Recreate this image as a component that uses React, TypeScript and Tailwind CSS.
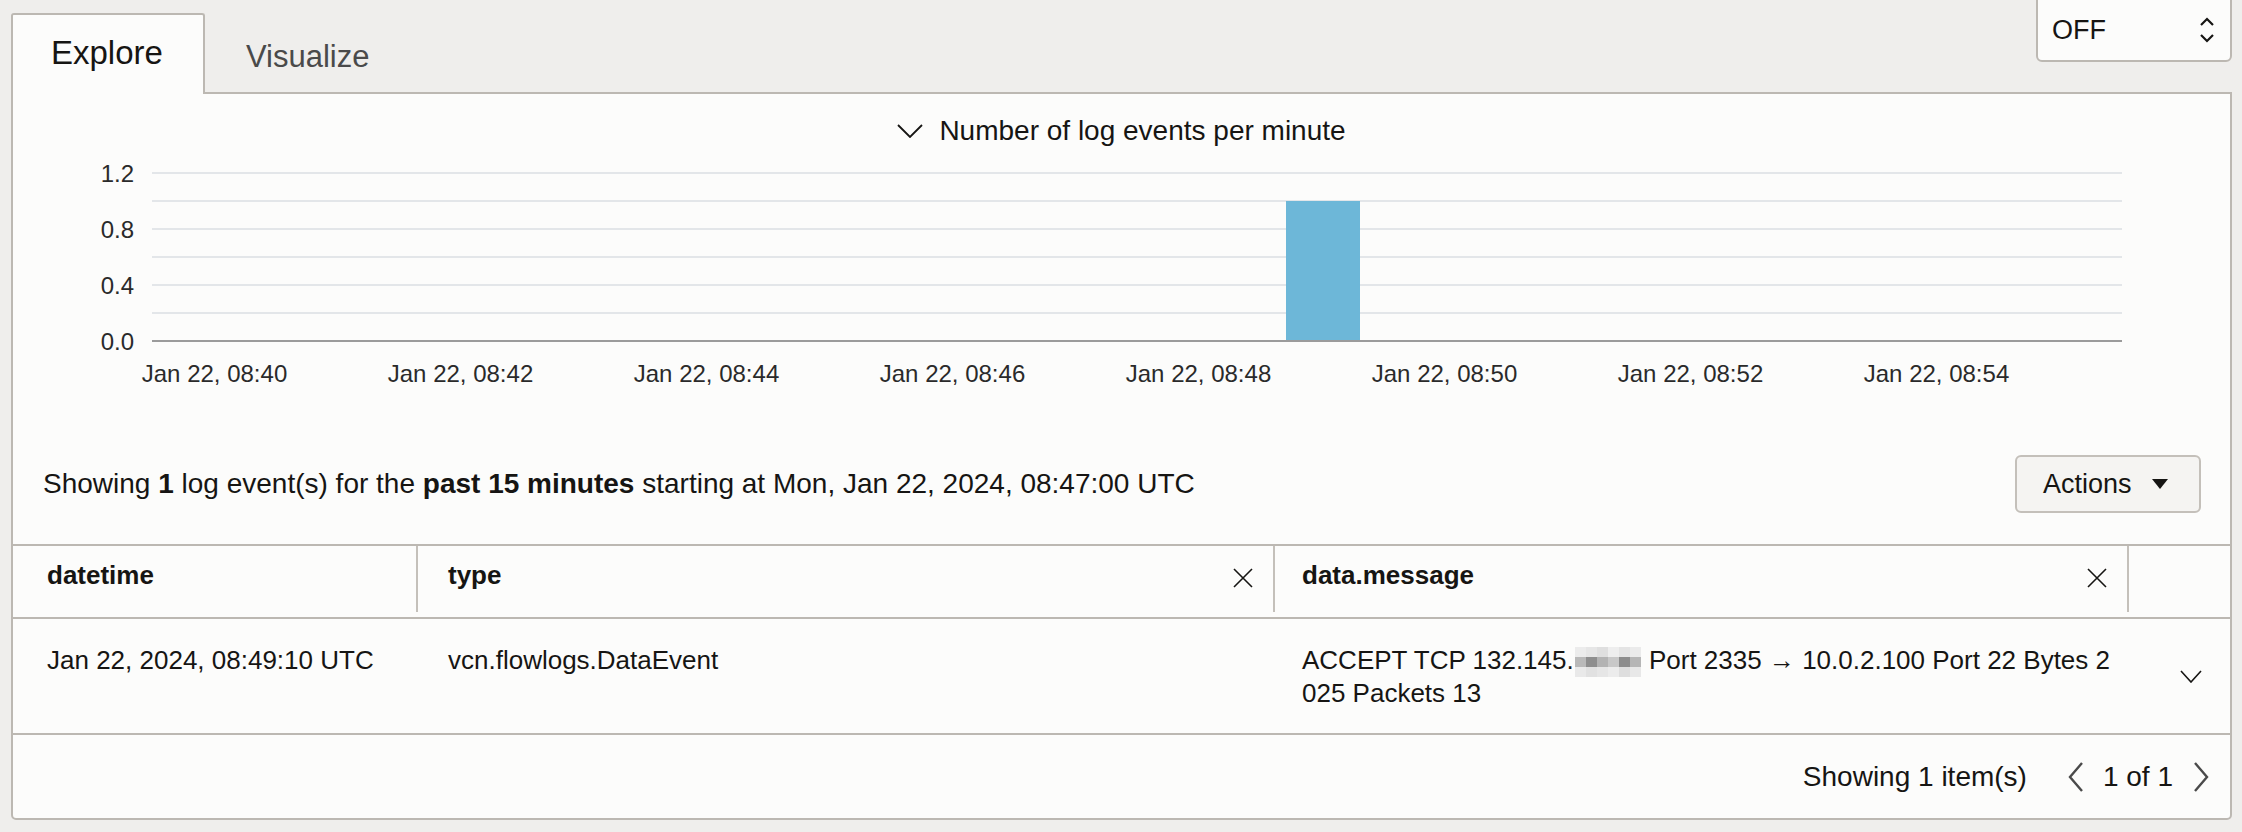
import React from 'react';

const font = { fontFamily: '"Liberation Sans", Arial, sans-serif' };

const yTicks = [
  { label: '1.2', y: 26 },
  { label: '0.8', y: 82 },
  { label: '0.4', y: 138 },
  { label: '0.0', y: 194 },
];
const gridYs = [26, 54, 82, 110, 138, 166];
const xLabels = ['08:40', '08:42', '08:44', '08:46', '08:48', '08:50', '08:52', '08:54'];

const ThinX = () => (
  <svg width="22" height="22" viewBox="0 0 22 22" fill="none" stroke="#161513" strokeWidth="1.6">
    <path d="M2 2 L20 20 M20 2 L2 20" />
  </svg>
);

const Blurred = () => {
  const cells = [
    '#ececec', '#e6e6e6', '#dfdfdf', '#eeeeee', '#e4e4e4', '#ebebeb',
    '#b9b9b9', '#8e8e8e', '#b3b3b3', '#c8c8c8', '#8c8c8c', '#b6b6b6',
    '#e9e9e9', '#e1e1e1', '#e6e6e6', '#ececec', '#dedede', '#e8e8e8',
  ];
  return (
    <span className="inline-grid grid-cols-6 w-[66px] h-[30px] align-middle mx-[1px]">
      {cells.map((c, i) => (
        <span key={i} style={{ backgroundColor: c }} />
      ))}
    </span>
  );
};

const Chart = () => (
  <svg width="2217" height="248" className="block">
    {gridYs.map((y) => (
      <line key={y} x1="139" x2="2109" y1={y} y2={y} stroke="#e3e6e9" strokeWidth="2" />
    ))}
    <rect x="1273" y="54" width="74" height="140" fill="#6db7d8" />
    <line x1="139" x2="2109" y1="194" y2="194" stroke="#9b9b9b" strokeWidth="2" />
    {yTicks.map((t) => (
      <text key={t.label} x="121" y={t.y + 8.5} textAnchor="end" fontSize="24" fill="#2a2a2a" style={font}>
        {t.label}
      </text>
    ))}
    {xLabels.map((l, i) => (
      <text key={l} x={201.5 + 246 * i} y="234.5" textAnchor="middle" fontSize="24" fill="#2a2a2a" style={font}>
        Jan 22, {l}
      </text>
    ))}
  </svg>
);

const App = () => {
  return (
    <div className="w-full h-[832px] bg-[#efeeec] text-[#161513] overflow-hidden" style={font}>
      {/* top row: tabs + refresh select */}
      <div className="flex justify-between h-[92px]">
        <div className="flex items-start pl-[11px]">
          <div className="relative z-10 mt-[13px] h-[81px] w-[194px] border-2 border-b-0 border-[#bcb8b2] bg-[#fcfcfb] pl-[38px] pt-[20px] text-[33px] leading-[36px] rounded-t-[3px]">
            Explore
          </div>
          <div className="ml-[41px] mt-[39px] text-[31px] leading-[36px] text-[#4a4a4a]">Visualize</div>
        </div>
        <div className="-mt-[2px] mr-[10px] h-[64px] w-[196px] border-2 border-[#bcb8b2] bg-[#fcfcfb] rounded-b-[6px] flex items-center justify-between pl-[14px] pr-[14px] pt-[2px]">
          <span className="text-[27px] leading-[32px] -mt-[2px]">OFF</span>
          <svg width="18" height="28" viewBox="0 0 18 28" fill="none" stroke="#161513" strokeWidth="2.2" className="-mt-[2px]">
            <path d="M3 9 L9 3 L15 9 M3 19 L9 25 L15 19" />
          </svg>
        </div>
      </div>

      {/* main panel */}
      <div className="ml-[11px] mr-[10px] h-[728px] border-2 border-[#bcb8b2] bg-[#fcfcfb] rounded-b-[5px] flex flex-col">
        <div className="pt-[21px] flex justify-center items-center gap-[16px] h-[53px]">
          <svg width="26" height="14" viewBox="0 0 26 14" fill="none" stroke="#161513" strokeWidth="1.8">
            <path d="M1 1 L13 13 L25 1" />
          </svg>
          <span className="text-[28px] leading-[32px]">Number of log events per minute</span>
        </div>
        <Chart />

        <div className="mt-[60px] h-[58px] flex items-center justify-between pl-[30px] pr-[29px]">
          <div className="text-[28px] leading-[32px]">
            Showing <b>1</b> log event(s) for the <b>past 15 minutes</b> starting at Mon, Jan 22, 2024, 08:47:00 UTC
          </div>
          <button className="h-[58px] w-[186px] border-2 border-[#c4c0ba] rounded-[6px] bg-[#f5f4f2] flex items-center pl-[26px] gap-[20px]">
            <span className="text-[27px] leading-[32px]">Actions</span>
            <svg width="16" height="10" viewBox="0 0 16 10">
              <path d="M0 0 H16 L8 10 Z" fill="#161513" />
            </svg>
          </button>
        </div>

        {/* table */}
        <div className="mt-[31px] border-t-2 border-[#bcb8b2] flex-1 flex flex-col">
          <div className="h-[73px] flex border-b-2 border-[#bcb8b2] font-bold text-[26px] leading-[32px]">
            <div className="w-[403px] pl-[34px] pt-[13px]">datetime</div>
            <div className="w-[2px] h-[66px] bg-[#c4c0ba]" />
            <div className="w-[855px] pl-[30px] pr-[19px] pt-[13px] flex justify-between items-start">
              <span>type</span>
              <span className="mt-[8px]"><ThinX /></span>
            </div>
            <div className="w-[2px] h-[66px] bg-[#c4c0ba]" />
            <div className="w-[852px] pl-[27px] pr-[19px] pt-[13px] flex justify-between items-start">
              <span>data.message</span>
              <span className="mt-[8px]"><ThinX /></span>
            </div>
            <div className="w-[2px] h-[66px] bg-[#c4c0ba]" />
            <div className="flex-1" />
          </div>

          <div className="h-[116px] flex border-b-2 border-[#bcb8b2] text-[26px] leading-[32px]">
            <div className="w-[403px] pl-[34px] pt-[25px]">Jan 22, 2024, 08:49:10 UTC</div>
            <div className="w-[857px] pl-[32px] pt-[25px]">vcn.flowlogs.DataEvent</div>
            <div className="w-[856px] pl-[29px] pt-[25px] whitespace-nowrap">
              <div>
                ACCEPT TCP 132.145.<Blurred /> Port 2335 → 10.0.2.100 Port 22 Bytes 2
              </div>
              <div>025 Packets 13</div>
            </div>
            <div className="flex-1 flex items-center justify-end pr-[28px]">
              <svg width="22" height="13" viewBox="0 0 22 13" fill="none" stroke="#161513" strokeWidth="1.6">
                <path d="M1 1 L11 12 L21 1" />
              </svg>
            </div>
          </div>

          <div className="flex-1 flex items-center justify-end pr-[21px] text-[28px] leading-[32px]">
            <span>Showing 1 item(s)</span>
            <svg width="16" height="32" viewBox="0 0 16 32" fill="none" stroke="#4a4a4a" strokeWidth="2.4" className="ml-[41px]">
              <path d="M14 2 L2 16 L14 30" />
            </svg>
            <span className="ml-[19px]">1 of 1</span>
            <svg width="16" height="32" viewBox="0 0 16 32" fill="none" stroke="#4a4a4a" strokeWidth="2.4" className="ml-[20px]">
              <path d="M2 2 L14 16 L2 30" />
            </svg>
          </div>
        </div>
      </div>
    </div>
  );
};

export default App;
